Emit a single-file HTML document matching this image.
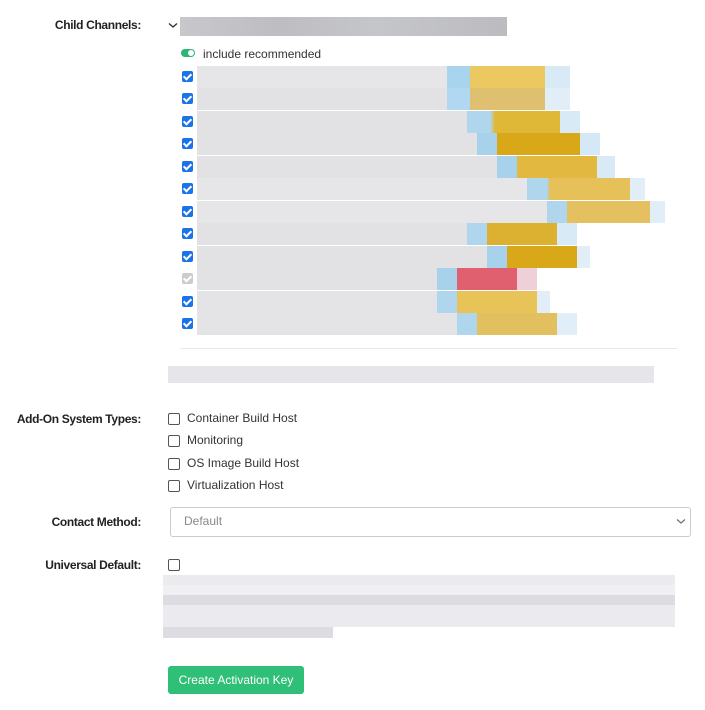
<!DOCTYPE html>
<html><head><meta charset="utf-8"><style>
body{margin:0;width:705px;height:710px;background:#fff;font-family:"Liberation Sans",sans-serif;position:relative;overflow:hidden;color:#333}
.a{position:absolute}
.lbl{position:absolute;right:564px;font-weight:bold;font-size:12px;letter-spacing:-0.35px;color:#222;white-space:nowrap}
.cb{position:absolute;width:11px;height:11px;border-radius:2px;background:#1a73e8;left:182px}
.cb::after{content:"";position:absolute;left:3px;top:1px;width:3px;height:6px;border:solid #fff;border-width:0 2px 2px 0;transform:rotate(45deg)}
.ub{position:absolute;width:10px;height:10px;border:1px solid #555;border-radius:2px;left:168px;background:#fff}
.t{position:absolute;left:187px;font-size:12px;color:#333}
.r{position:absolute;left:197px;height:22px}
</style></head><body>
<div class="lbl" style="top:18px">Child Channels:</div>
<svg class="a" style="left:168px;top:22px" width="10" height="7"><path d="M1 1.5 L5 5 L9 1.5" fill="none" stroke="#333" stroke-width="1.4"/></svg>
<div class="a" style="left:180px;top:17px;width:327px;height:19px;background:linear-gradient(90deg,#c8c8cc,#bdbdc2 30%,#c5c6ca 60%,#bcbcc0)"></div>
<div class="a" style="left:181px;top:49px;width:14px;height:8px;border-radius:4px;background:#2bb673"><div class="a" style="left:7px;top:1px;width:6px;height:6px;border-radius:3px;background:#fff"></div></div>
<div class="a" style="left:203px;top:47px;font-size:12px;color:#333">include recommended</div>

<div class="r" style="top:66px;width:373px;background:linear-gradient(90deg,#e6e6e8 0 250px,#a8d4ee 250px 273px,#ebc860 273px 348px,#d8eaf5 348px 373px)"></div>
<div class="r" style="top:88px;width:373px;background:linear-gradient(90deg,#e2e2e4 0 250px,#b0d8f0 250px 273px,#dfc070 273px 348px,#e2eef7 348px 373px)"></div>
<div class="r" style="top:111px;width:383px;background:linear-gradient(90deg,#e2e2e4 0 270px,#b0d6ee 270px 293px,#e0b838 298px 363px,#d8eaf5 363px 383px)"></div>
<div class="r" style="top:133px;width:403px;background:linear-gradient(90deg,#e2e2e4 0 280px,#a8d2ec 280px 300px,#d8a818 300px 383px,#d4e8f5 383px 403px)"></div>
<div class="r" style="top:156px;width:418px;background:linear-gradient(90deg,#e2e2e4 0 300px,#a8d2ec 300px 320px,#e2b840 320px 400px,#d8eaf5 400px 418px)"></div>
<div class="r" style="top:178px;width:448px;background:linear-gradient(90deg,#e6e6e8 0 330px,#b0d6ee 330px 350px,#e6c058 353px 433px,#e2eef7 433px 448px)"></div>
<div class="r" style="top:201px;width:468px;background:linear-gradient(90deg,#e6e6e8 0 350px,#b0d6ee 350px 370px,#e4c060 370px 453px,#e2eef7 453px 468px)"></div>
<div class="r" style="top:223px;width:380px;background:linear-gradient(90deg,#e2e2e4 0 270px,#b0d6ee 270px 290px,#dcb030 290px 360px,#d8eaf5 360px 380px)"></div>
<div class="r" style="top:246px;width:393px;background:linear-gradient(90deg,#e2e2e4 0 290px,#a8d2ec 290px 310px,#d8a818 310px 380px,#e2eef7 380px 393px)"></div>
<div class="r" style="top:268px;width:340px;background:linear-gradient(90deg,#e2e2e4 0 240px,#a8d2ec 240px 260px,#e06070 260px 320px,#f0d0d8 320px 340px)"></div>
<div class="r" style="top:291px;width:353px;background:linear-gradient(90deg,#e4e4e6 0 240px,#b0d6ee 240px 260px,#e8c458 260px 340px,#e2eef7 340px 353px)"></div>
<div class="r" style="top:313px;width:380px;background:linear-gradient(90deg,#e4e4e6 0 260px,#b0d6ee 260px 280px,#e2c060 280px 360px,#e2eef7 360px 380px)"></div>

<div class="cb" style="top:71px"></div><div class="cb" style="top:93px"></div><div class="cb" style="top:116px"></div><div class="cb" style="top:138px"></div><div class="cb" style="top:161px"></div><div class="cb" style="top:183px"></div><div class="cb" style="top:206px"></div><div class="cb" style="top:228px"></div><div class="cb" style="top:251px"></div><div class="cb" style="top:273px;background:#ccc"></div><div class="cb" style="top:296px"></div><div class="cb" style="top:318px"></div>

<div class="a" style="left:180px;top:348px;width:497px;height:1px;background:#e8e8e8"></div>
<div class="a" style="left:168px;top:366px;width:486px;height:17px;background:#e6e6ea"></div>

<div class="lbl" style="top:412px">Add-On System Types:</div>
<div class="ub" style="top:413px"></div><div class="t" style="top:411px">Container Build Host</div>
<div class="ub" style="top:435px"></div><div class="t" style="top:433px">Monitoring</div>
<div class="ub" style="top:458px"></div><div class="t" style="top:456px">OS Image Build Host</div>
<div class="ub" style="top:480px"></div><div class="t" style="top:478px">Virtualization Host</div>

<div class="lbl" style="top:515px">Contact Method:</div>
<div class="a" style="left:170px;top:507px;width:519px;height:28px;border:1px solid #ccc;border-radius:3px"></div>
<div class="a" style="left:184px;top:514px;font-size:12px;color:#888">Default</div>
<svg class="a" style="left:676px;top:518px" width="10" height="7"><path d="M1 1.5 L5 5 L9 1.5" fill="none" stroke="#777" stroke-width="1.4"/></svg>

<div class="lbl" style="top:558px">Universal Default:</div>
<div class="ub" style="top:559px"></div>
<div class="a" style="left:163px;top:575px;width:512px;height:52px;background:linear-gradient(180deg,#ebebef 0 10px,#f0f0f2 10px 20px,#dcdce2 20px 30px,#ebebef 30px 52px)"></div>
<div class="a" style="left:163px;top:627px;width:170px;height:11px;background:#dcdce2"></div>

<div class="a" style="left:168px;top:666px;width:136px;height:28px;border-radius:3px;background:#2fbf76;color:#fff;font-size:12px;line-height:28px;text-align:center">Create Activation Key</div>
</body></html>
